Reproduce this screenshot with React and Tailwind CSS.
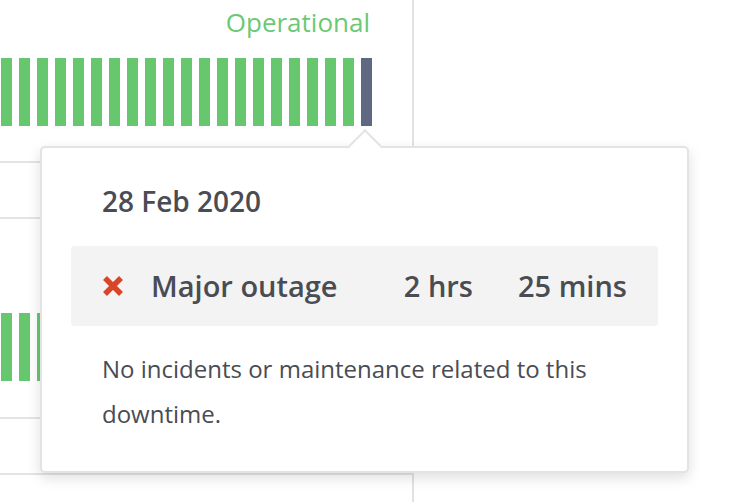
import React from "react";

const Bars = ({ last }) => {
  const n = 21;
  return (
    <div className="flex justify-end gap-[7px]">
      {Array.from({ length: n }).map((_, i) => (
        <div
          key={i}
          className={
            i === n - 1 && last
              ? "w-[11px] h-[68px] shrink-0 bg-[#5f6a82]"
              : "w-[11px] h-[68px] shrink-0 bg-[#67c76e]"
          }
        />
      ))}
    </div>
  );
};

export default function App() {
  return (
    <div
      className="relative w-[736px] h-[502px] overflow-hidden bg-white text-[#4a4c53]"
      style={{ fontFamily: "'Open Sans', Lato, sans-serif" }}
    >
      <div className="w-[414px] h-full border-r-2 border-[#e2e2e2] flex flex-col">
        <div className="h-[163px] shrink-0 border-b-2 border-[#e4e4e4] pr-[40px] pt-[6px]">
          <div className="text-right pr-[2px] text-[26px] leading-[32px] text-[#6cc874]">
            Operational
          </div>
          <div className="mt-[20px]">
            <Bars last />
          </div>
        </div>
        <div className="h-[56px] shrink-0 border-b-2 border-[#e4e4e4]" />
        <div className="h-[200px] shrink-0 border-b-2 border-[#e4e4e4] pr-[40px] pt-[94px]">
          <Bars />
        </div>
        <div className="h-[56px] shrink-0 border-b-2 border-[#e4e4e4]" />
        <div className="flex-1" />
      </div>

      <div className="absolute left-[40px] top-[146px] w-[649px] h-[327px] bg-white border-2 border-[#e3e3e3] rounded-[5px] shadow-[0_5px_14px_rgba(0,0,0,0.13)] flex flex-col">
        <div className="absolute left-[311px] top-[-14px] w-[24px] h-[24px] rotate-45 bg-white border-l-2 border-t-2 border-[#e3e3e3]" />
        <div className="relative pt-[37px] px-[60px] text-[28px] leading-[32px] font-semibold">
          28 Feb 2020
        </div>
        <div className="relative mt-[29px] mx-[29px] h-[80px] rounded-[4px] bg-[#f3f3f3] px-[31px] flex items-center text-[29px] font-semibold">
          <svg width="22" height="22" viewBox="0 0 22 22" className="shrink-0">
            <path d="M3 3 L19 19 M19 3 L3 19" stroke="#d8462a" strokeWidth="5.5" strokeLinecap="butt" />
          </svg>
          <span className="ml-[27px]">Major outage</span>
          <span className="flex-1" />
          <span>2 hrs</span>
          <span className="ml-[45px]">25 mins</span>
        </div>
        <div className="relative mt-[20px] px-[60px] text-[24px] leading-[45px]">
          No incidents or maintenance related to this downtime.
        </div>
      </div>
    </div>
  );
}
